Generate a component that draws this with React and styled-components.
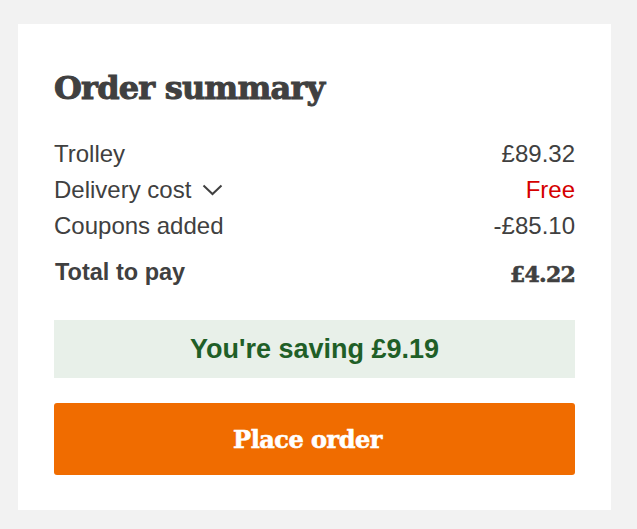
import styled, { createGlobalStyle } from 'styled-components';

const GlobalStyle = createGlobalStyle`
  html, body {
    margin: 0;
    padding: 0;
    background: #f2f2f2;
  }
  body {
    font-family: 'Liberation Sans', Arial, sans-serif;
    color: #404040;
  }
`;

const Page = styled.div`
  padding: 24px 0 19px 18px;
`;

const Card = styled.section`
  width: 593px;
  box-sizing: border-box;
  background: #ffffff;
  padding: 36px 36px 35px;
  display: flex;
  flex-direction: column;
`;

const Heading = styled.h2`
  margin: 8px 0 28px;
  font-family: 'DejaVu Serif', serif;
  font-weight: 700;
  font-size: 32px;
  line-height: 40px;
  color: #404040;
  letter-spacing: -0.8px;
  -webkit-text-stroke: 1px #404040;
`;

const Rows = styled.div`
  display: flex;
  flex-direction: column;
`;

const Row = styled.div`
  display: flex;
  justify-content: space-between;
  align-items: center;
  height: 36px;
  font-size: 24px;
`;

const Label = styled.span`
  display: flex;
  align-items: center;
  gap: 11px;
`;

const Value = styled.span`
  color: ${p => (p.$free ? '#d50000' : '#404040')};
`;

const TotalRow = styled(Row)`
  margin-top: 12px;
  font-weight: 700;
`;

const TotalLabel = styled.span`
  font-size: 23.5px;
  padding-left: 1px;
  margin-top: -4px;
`;

const TotalValue = styled.span`
  font-family: 'DejaVu Serif', serif;
  font-size: 22px;
  font-weight: 700;
  letter-spacing: -0.8px;
  -webkit-text-stroke: 0.6px #404040;
`;

const Saving = styled.div`
  margin-top: 28px;
  height: 58px;
  background: #e8f0e9;
  display: flex;
  align-items: center;
  justify-content: center;
  font-size: 27px;
  font-weight: 700;
  color: #1f5f27;
`;

const PlaceButton = styled.button`
  margin-top: 25px;
  height: 72px;
  padding: 0 14px 0 0;
  border: 0;
  border-radius: 3px;
  background: #f06c00;
  color: #ffffff;
  font-family: 'DejaVu Serif', serif;
  font-weight: 700;
  font-size: 24px;
  letter-spacing: -0.5px;
  -webkit-text-stroke: 0.6px #ffffff;
  cursor: pointer;
`;

function Chevron() {
  return (
    <svg width="21" height="12" viewBox="0 0 21 12" fill="none">
      <path d="M1.5 1.5 L10.5 10 L19.5 1.5" stroke="#404040" strokeWidth="2" />
    </svg>
  );
}

export default function App() {
  return (
    <Page>
      <GlobalStyle />
      <Card>
        <Heading>Order summary</Heading>
        <Rows>
          <Row>
            <Label>Trolley</Label>
            <Value>£89.32</Value>
          </Row>
          <Row>
            <Label>
              Delivery cost <Chevron />
            </Label>
            <Value $free>Free</Value>
          </Row>
          <Row>
            <Label>Coupons added</Label>
            <Value>-£85.10</Value>
          </Row>
        </Rows>
        <TotalRow>
          <TotalLabel>Total to pay</TotalLabel>
          <TotalValue>£4.22</TotalValue>
        </TotalRow>
        <Saving>You're saving £9.19</Saving>
        <PlaceButton>Place order</PlaceButton>
      </Card>
    </Page>
  );
}
